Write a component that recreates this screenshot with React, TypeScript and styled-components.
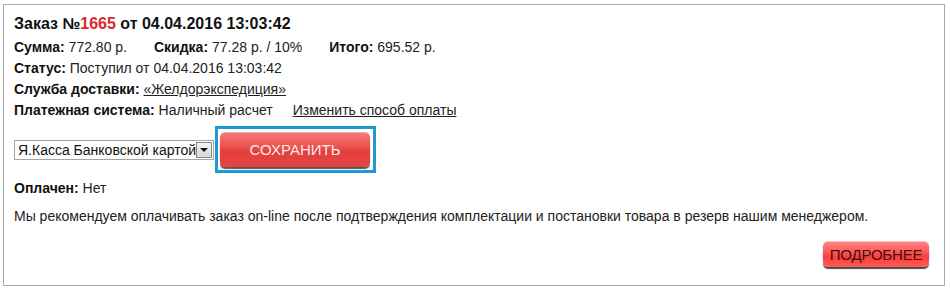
import { FC } from "react";
import styled, { createGlobalStyle } from "styled-components";

const GlobalStyle = createGlobalStyle`
	html, body {
		margin: 0;
		padding: 0;
		background: #fff;
	}

	body {
		font-family: "Liberation Sans", Arial, sans-serif;
		color: #222;
	}
`;

interface ISummaryItem {
	label: string;
	value: string;
}

const summary: ISummaryItem[] = [
	{ label: "Сумма:", value: "772.80 р." },
	{ label: "Скидка:", value: "77.28 р. / 10%" },
	{ label: "Итого:", value: "695.52 р." },
];

const App: FC = () => {
	return (
		<>
			<GlobalStyle />
			<OrderCard>
				<Title>
					Заказ №<OrderNumber>1665</OrderNumber> от 04.04.2016 13:03:42
				</Title>

				<Row>
					{summary.map((item) => (
						<SummaryItem key={item.label}>
							<Label>{item.label}</Label> {item.value}
						</SummaryItem>
					))}
				</Row>

				<Row>
					<Label>Статус:</Label> Поступил от 04.04.2016 13:03:42
				</Row>

				<Row>
					<Label>Служба доставки:</Label> <TextLink href="#">«Желдорэкспедиция»</TextLink>
				</Row>

				<Row>
					<Label>Платежная система:</Label> Наличный расчет
					<TextLink href="#" $spaced>
						Изменить способ оплаты
					</TextLink>
				</Row>

				<PaymentForm>
					<SelectBox>
						<SelectText>Я.Касса Банковской картой</SelectText>
						<SelectArrow />
					</SelectBox>
					<FocusFrame>
						<SaveButton type="button">Сохранить</SaveButton>
					</FocusFrame>
				</PaymentForm>

				<PaidRow>
					<Label>Оплачен:</Label> Нет
				</PaidRow>

				<Notice>
					Мы рекомендуем оплачивать заказ on-line после подтверждения комплектации и постановки
					товара в резерв нашим менеджером.
				</Notice>

				<Footer>
					<MoreButton type="button">Подробнее</MoreButton>
				</Footer>
			</OrderCard>
		</>
	);
};

export default App;

const OrderCard = styled.div`
	box-sizing: border-box;
	width: 942px;
	height: 282px;
	margin: 4px 0 0 3px;
	padding: 9px 15px 0 10px;
	border: 1px solid #a9a9a9;
	font-size: 14px;
`;

const Title = styled.h2`
	margin: 0;
	font-size: 16px;
	font-weight: bold;
	line-height: 20px;
	color: #111;
`;

const OrderNumber = styled.span`
	color: #d8262b;
`;

const Row = styled.div`
	white-space: nowrap;
	line-height: 21px;

	&:first-of-type {
		margin-top: 3px;
	}
`;

const SummaryItem = styled.span`
	margin-right: 27px;
	white-space: pre;
`;

const Label = styled.b`
	color: #111;
`;

const TextLink = styled.a<{ $spaced?: boolean }>`
	margin-left: ${({ $spaced }) => ($spaced ? "20px" : "0")};
	color: #222;
	text-decoration: underline;
`;

const PaymentForm = styled.div`
	display: flex;
	align-items: center;
	gap: 1px;
	margin-top: 5px;
`;

const SelectBox = styled.div`
	box-sizing: border-box;
	display: flex;
	align-items: center;
	width: 200px;
	height: 20px;
	padding-left: 3px;
	border: 1px solid #a5a5a5;
	background: #fff;
`;

const SelectText = styled.span`
	flex: 1;
	overflow: hidden;
	font-size: 14px;
	color: #111;
	white-space: nowrap;
`;

const SelectArrow = styled.span`
	position: relative;
	flex: none;
	box-sizing: border-box;
	width: 16px;
	height: 16px;
	margin-right: 1px;
	border: 1px solid #8a8a8a;
	background: linear-gradient(#f4f4f4, #d8d8d8);

	&::after {
		content: "";
		position: absolute;
		left: 3px;
		top: 5px;
		border-left: 4px solid transparent;
		border-right: 4px solid transparent;
		border-top: 4px solid #111;
	}
`;

const FocusFrame = styled.div`
	box-sizing: border-box;
	width: 161px;
	height: 47px;
	padding: 3px 3px 3px 2px;
	border: 3px solid #1c9ad6;
`;

const SaveButton = styled.button`
	width: 150px;
	height: 35px;
	padding: 0;
	border: 0;
	border-radius: 5px;
	background: linear-gradient(#f57a78 0%, #ec4f4d 45%, #e43d3b 55%, #e44643 100%);
	box-shadow: 0 2px 1px #555, inset 0 1px 0 rgba(255, 255, 255, 0.4);
	font-family: "Liberation Sans", Arial, sans-serif;
	font-size: 15px;
	color: #fbeaea;
	text-transform: uppercase;
	cursor: pointer;
`;

const PaidRow = styled.div`
	margin-top: 5px;
	line-height: 21px;
`;

const Notice = styled.p`
	margin: 7px 0 0;
	line-height: 21px;
`;

const Footer = styled.div`
	display: flex;
	justify-content: flex-end;
	margin-top: 14px;
`;

const MoreButton = styled.button`
	width: 106px;
	height: 26px;
	padding: 0;
	border: 0;
	border-radius: 5px;
	background: linear-gradient(#ff8a88 0%, #ff5a57 40%, #f83f3c 60%, #ff5a57 100%);
	box-shadow: 0 2px 1px #4a4a4a, inset 0 1px 0 rgba(255, 255, 255, 0.5);
	font-family: "Liberation Sans", Arial, sans-serif;
	font-size: 15px;
	letter-spacing: -0.2px;
	color: #4a0c0c;
	text-transform: uppercase;
	cursor: pointer;
`;
